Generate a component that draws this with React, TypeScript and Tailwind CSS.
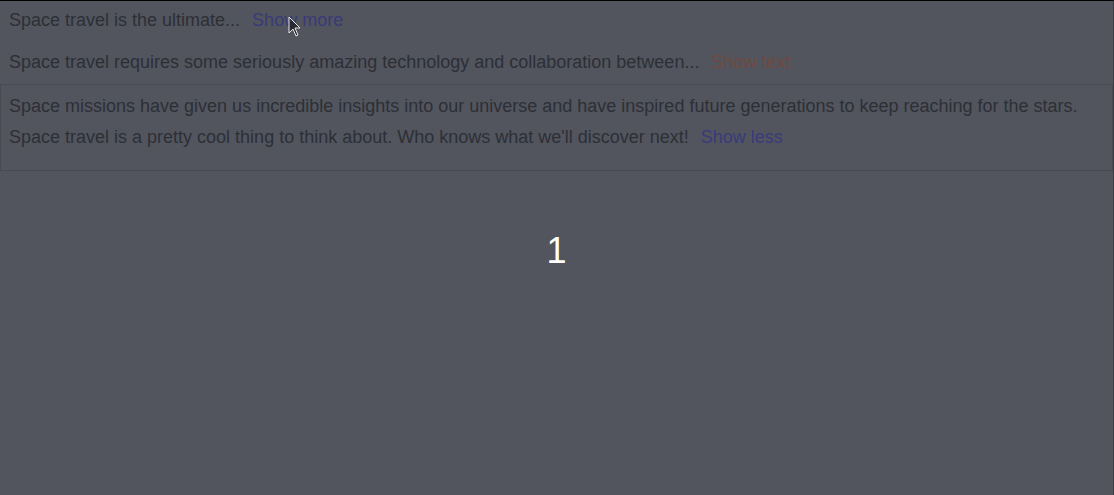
import React from "react";

export default function App() {
  return (
    <div
      className="relative h-[495px] w-[1114px] overflow-hidden border-t border-r border-t-black border-r-[#3c3e45] bg-[#52555e] text-[18px] text-[#2d2f36]"
      style={{ fontFamily: '"Liberation Sans", Arial, sans-serif' }}
    >
      <div className="flex h-[39px] items-center pl-[9px]">
        <span>Space travel is the ultimate...</span>
        <span className="ml-[12px] text-[#383b77]">Show more</span>
      </div>
      <div className="flex h-[44px] items-center pl-[9px]">
        <span>Space travel requires some seriously amazing technology and collaboration between...</span>
        <span className="ml-[12px] text-[#6f4a40]">Show text</span>
      </div>
      <div className="h-[87px] border border-[#484a52] pl-[8px] pt-[6px] leading-[31px]">
        <p>
          Space missions have given us incredible insights into our universe and have inspired future generations to keep reaching for the stars.
        </p>
        <p>
          Space travel is a pretty cool thing to think about. Who knows what we'll discover next!
          <span className="ml-[12px] text-[#383b7a]">Show less</span>
        </p>
      </div>
      <div className="flex h-[160px] items-center justify-center text-[36px] text-white">1</div>
      <svg
        className="absolute left-[288px] top-[15px]"
        width="14"
        height="22"
        viewBox="0 0 14 22"
      >
        <path d="M1 1 L1 17 L5 13 L8 20 L10 19 L7 12 L12 12 Z" fill="#2a2b30" stroke="#e8e8e8" strokeWidth="1" />
      </svg>
    </div>
  );
}
